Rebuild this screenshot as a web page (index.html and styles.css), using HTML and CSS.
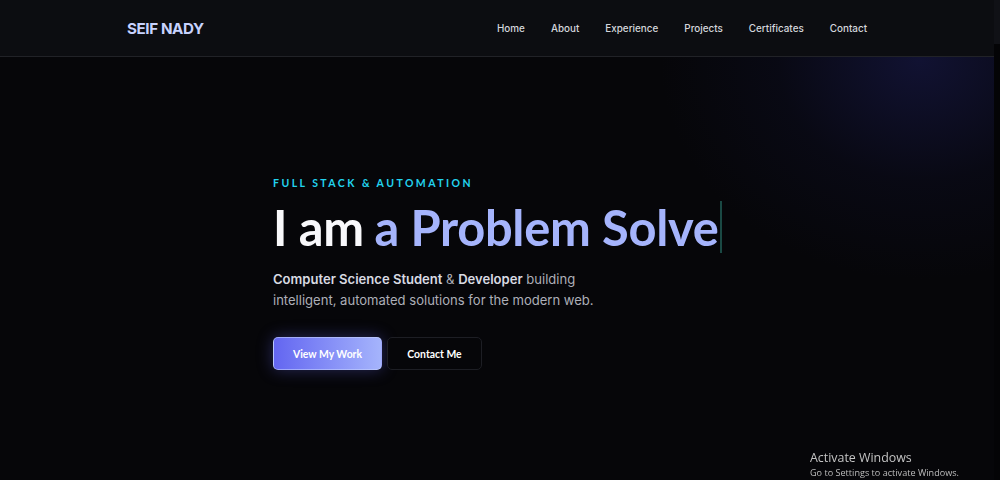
FILE: index.html
```html
<!DOCTYPE html>
<html lang="en">
<head>
<meta charset="utf-8">
<title>Seif Nady</title>
<link rel="stylesheet" href="styles.css">
</head>
<body>
  <div class="page">
    <header class="nav">
      <div class="nav-inner">
        <a class="logo" href="#">SEIF NADY</a>
        <nav class="links">
          <a href="#">Home</a>
          <a href="#">About</a>
          <a href="#">Experience</a>
          <a href="#">Projects</a>
          <a href="#">Certificates</a>
          <a href="#">Contact</a>
        </nav>
      </div>
    </header>
    <main class="hero">
      <div class="hero-inner">
        <p class="eyebrow">FULL STACK &amp; AUTOMATION</p>
        <h1 class="title"><span class="plain">I am</span> <span class="accent">a Problem Solve</span><span class="cursor"></span></h1>
        <p class="lead"><b class="hl">Computer Science Student</b> &amp; <b class="hl">Developer</b> building intelligent, automated solutions for the modern web.</p>
        <div class="actions">
          <a class="btn btn-primary" href="#">View My Work</a>
          <a class="btn btn-ghost" href="#">Contact Me</a>
        </div>
      </div>
    </main>
  </div>
  <aside class="scrollbar"><div class="thumb"></div></aside>
  <div class="activate">
    <div class="act-title">Activate Windows</div>
    <div class="act-sub">Go to Settings to activate Windows.</div>
  </div>
</body>
</html>
```
FILE: styles.css
```css
* {
  box-sizing: border-box;
}
html {
  background: #060609;
}
body {
  margin: 0;
  height: 480px;
  overflow: hidden;
  background: #060609;
  color: #e5e7eb;
  font-family: Inter, "Liberation Sans", sans-serif;
  display: grid;
  grid-template-columns: 1fr 6px;
}
a {
  text-decoration: none;
  color: inherit;
}
.page {
  display: flex;
  flex-direction: column;
  background:
    radial-gradient(ellipse 260px 220px at 920px 60px, rgba(34, 36, 112, 0.4), rgba(24, 26, 80, 0.15) 55%, rgba(6, 6, 9, 0) 100%),
    #060609;
}
.scrollbar {
  background: #040406;
}
.thumb {
  height: 44px;
  background: #101116;
}
.nav {
  height: 57px;
  background: #0c0d11;
  border-bottom: 1px solid #212227;
}
.nav-inner {
  max-width: 740px;
  margin: 0 auto;
  height: 56px;
  display: flex;
  align-items: center;
  justify-content: space-between;
}
.logo {
  font-weight: 700;
  font-size: 15.2px;
  letter-spacing: -0.4px;
  color: #c7d2fe;
}
.links {
  display: flex;
  gap: 26px;
  font-size: 9.9px;
  font-weight: 500;
  color: #d4d6dc;
}
.hero {
  flex: 1;
  display: flex;
  justify-content: center;
  padding-top: 119px;
}
.hero-inner {
  width: 448px;
}
.eyebrow {
  margin: 0;
  font-family: Lato, "Liberation Sans", sans-serif;
  font-weight: 700;
  font-size: 10.5px;
  letter-spacing: 2.45px;
  color: #22d3ee;
  line-height: 14px;
}
.title {
  margin: 9px 0 0;
  font-family: Lato, "Liberation Sans", sans-serif;
  font-weight: 700;
  font-size: 48.8px;
  line-height: 56px;
  letter-spacing: -0.3px;
  white-space: nowrap;
  display: flex;
  align-items: center;
}
.plain {
  color: #f8f8fb;
}
.accent {
  color: #a5b4fc;
  margin-left: 0.22em;
}
.cursor {
  flex: 0 0 2px;
  width: 2px;
  height: 52px;
  margin-left: 2px;
  background: #1a4944;
}
.lead {
  margin: 14px 0 0;
  font-size: 13.05px;
  line-height: 20.5px;
  color: #adafb8;
  max-width: 340px;
}
.hl {
  color: #d8dae2;
  font-weight: 600;
}
.actions {
  display: flex;
  gap: 4px;
  margin-top: 27px;
}
.btn {
  height: 33px;
  display: inline-flex;
  align-items: center;
  justify-content: center;
  border-radius: 5px;
  font-family: Lato, "Liberation Sans", sans-serif;
  font-weight: 700;
  font-size: 10.4px;
  color: #ffffff;
}
.btn-primary {
  width: 109px;
  background: linear-gradient(90deg, #6366f1, #a5b4fc);
  border: 1px solid rgba(199, 210, 254, 0.6);
  box-shadow: 0 0 16px rgba(99, 102, 241, 0.35);
}
.btn-ghost {
  width: 95px;
  margin-left: 1px;
  background: #060609;
  border: 1px solid #1d1e24;
}
.activate {
  position: fixed;
  left: 810px;
  top: 450px;
  font-family: "Open Sans", "Noto Sans", sans-serif;
  color: #c4c4c4;
}
.act-title {
  font-size: 12.4px;
  line-height: 16px;
}
.act-sub {
  font-size: 9.1px;
  line-height: 14px;
  color: #bdbdbd;
}
```
